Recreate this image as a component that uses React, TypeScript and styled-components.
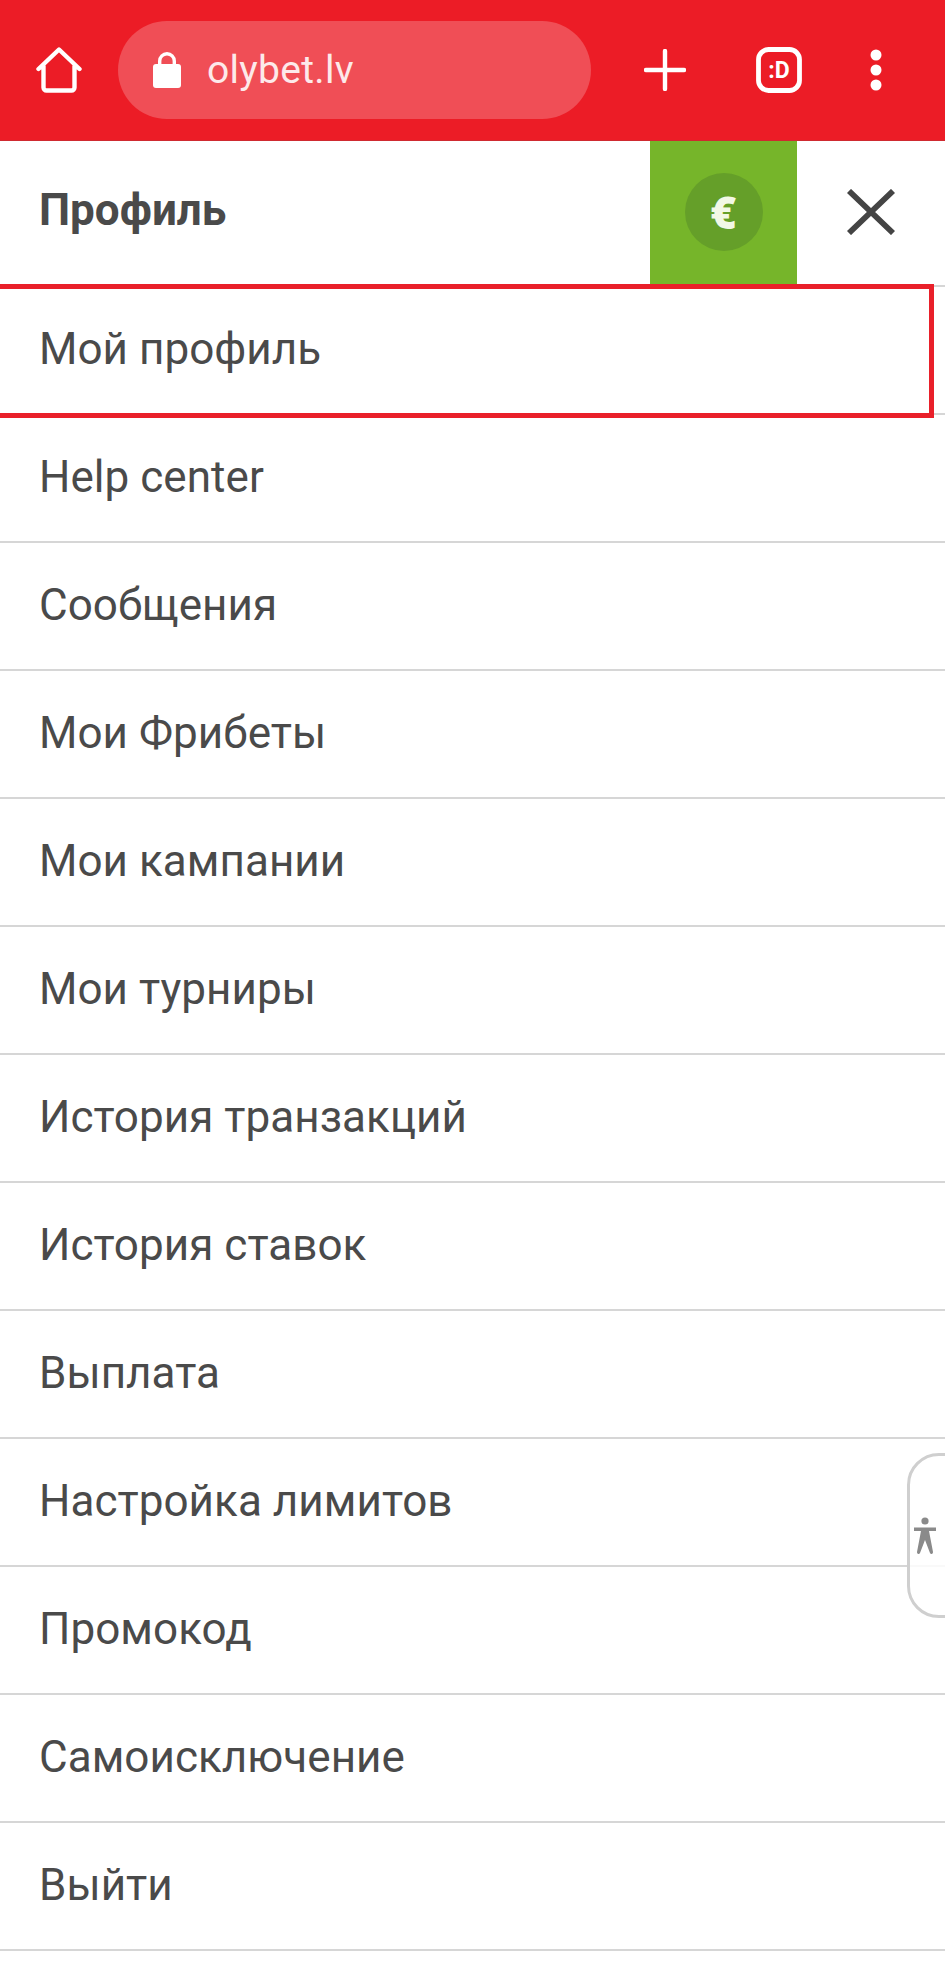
import React, { FC } from "react";
import styled, { createGlobalStyle } from "styled-components";

const GlobalStyle = createGlobalStyle`
  html, body {
    margin: 0;
    padding: 0;
    background: #fff;
  }
  body {
    font-family: Roboto, "Liberation Sans", sans-serif;
    color: #4a4a4a;
    overflow-x: hidden;
  }
`;

const Page = styled.div`
  position: relative;
  width: 945px;
  height: 1984px;
  overflow: hidden;
  background: #fff;
`;

const Toolbar = styled.div`
  display: flex;
  align-items: center;
  height: 141px;
  box-sizing: border-box;
  background: #ec1c26;
  border-bottom: 1px solid #cf2a30;
`;

const ToolButton = styled.div<{ $width: number }>`
  display: flex;
  align-items: center;
  justify-content: center;
  flex: none;
  width: ${(p) => p.$width}px;
  height: 100%;
`;

const UrlPill = styled.div`
  display: flex;
  align-items: center;
  flex: none;
  width: 473px;
  height: 98px;
  box-sizing: border-box;
  margin-bottom: 1px;
  padding-left: 35px;
  gap: 26px;
  border-radius: 49px;
  background: #f04e56;
`;

const UrlText = styled.span`
  font-size: 39px;
  letter-spacing: 0.3px;
  color: #fde9ea;
`;

const Header = styled.div`
  display: flex;
  align-items: stretch;
  height: 146px;
  box-sizing: border-box;
  border-bottom: 2px solid #d6d6d6;
`;

const Title = styled.div`
  display: flex;
  align-items: center;
  flex: 1;
  padding-left: 39px;
  padding-bottom: 6px;
  font-size: 44px;
  font-weight: 700;
`;

const BalanceBlock = styled.div`
  display: flex;
  align-items: center;
  justify-content: center;
  flex: none;
  width: 147px;
  padding-bottom: 3px;
  background: #76b52a;
`;

const CurrencyCircle = styled.div`
  display: flex;
  align-items: center;
  justify-content: center;
  width: 78px;
  height: 78px;
  border-radius: 50%;
  background: #659f29;
  color: #f2f8e6;
  font-family: "Open Sans", sans-serif;
  font-size: 44px;
  font-weight: 800;
`;

const CloseButton = styled.div`
  display: flex;
  align-items: center;
  justify-content: center;
  flex: none;
  width: 148px;
  padding-bottom: 3px;
  color: #444;
`;

const Row = styled.div<{ $active?: boolean }>`
  position: relative;
  display: flex;
  align-items: center;
  height: 128px;
  box-sizing: border-box;
  padding-left: 39px;
  padding-bottom: 3px;
  border-bottom: 2px solid #d6d6d6;
  font-size: 44px;
  letter-spacing: 0.05px;

  ${(p) =>
    p.$active &&
    `
    &::after {
      content: "";
      position: absolute;
      top: -3px;
      bottom: -5px;
      left: -8px;
      right: 11px;
      border: 5px solid #e9202a;
    }
  `}
`;

const AccessTab = styled.div`
  position: absolute;
  top: 1453px;
  right: -32px;
  display: flex;
  align-items: center;
  justify-content: flex-start;
  width: 70px;
  height: 165px;
  box-sizing: border-box;
  padding-left: 3px;
  border: 3px solid #cfcfcf;
  border-radius: 32px;
  background: rgba(255, 255, 255, 0.85);
`;

const items = [
  "Мой профиль",
  "Help center",
  "Сообщения",
  "Мои Фрибеты",
  "Мои кампании",
  "Мои турниры",
  "История транзакций",
  "История ставок",
  "Выплата",
  "Настройка лимитов",
  "Промокод",
  "Самоисключение",
  "Выйти",
];

const HomeIcon: FC = () => (
  <svg width="46" height="46" viewBox="0 0 46 46" fill="none" stroke="#fff" strokeWidth="4.4" strokeLinejoin="round" strokeLinecap="round">
    <path d="M2.5 22 L23 2.5 L43.5 22 M7.5 19 V40.5 a3 3 0 0 0 3 3 H35.5 a3 3 0 0 0 3 -3 V19" />
  </svg>
);

const LockIcon: FC = () => (
  <svg width="28" height="36" viewBox="0 0 28 36" fill="#fff">
    <path d="M5 15 V9 a9 9 0 0 1 18 0 V15 H19.6 V9 a5.6 5.6 0 0 0 -11.2 0 V15 Z" />
    <rect x="0" y="12" width="28" height="24" rx="3" />
  </svg>
);

const PlusIcon: FC = () => (
  <svg width="42" height="42" viewBox="0 0 42 42" stroke="#fff" strokeWidth="4.4" strokeLinecap="round">
    <path d="M21 2 V40 M2 21 H40" />
  </svg>
);

const TabIcon: FC = () => (
  <svg width="46" height="46" viewBox="0 0 46 46" fill="none">
    <rect x="2.5" y="2.5" width="41" height="41" rx="10" stroke="#fff" strokeWidth="4.8" />
    <text x="23" y="31" textAnchor="middle" fill="#fff" fontFamily="Roboto, sans-serif" fontSize="23" fontWeight="700">
      :D
    </text>
  </svg>
);

const MenuDots: FC = () => (
  <svg width="12" height="42" viewBox="0 0 12 42" fill="#fff">
    <circle cx="6" cy="6" r="5.5" />
    <circle cx="6" cy="21" r="5.5" />
    <circle cx="6" cy="36" r="5.5" />
  </svg>
);

const CloseIcon: FC = () => (
  <svg width="48" height="46" viewBox="0 0 48 46" stroke="currentColor" strokeWidth="5.8">
    <path d="M2 2 L46 44 M46 2 L2 44" />
  </svg>
);

const AccessIcon: FC = () => (
  <svg width="24" height="38" viewBox="0 0 24 38" fill="#8a8a8a">
    <circle cx="12" cy="4" r="3.6" />
    <path d="M1 10.5 H23 V14 H16 L20 35 a1.6 1.6 0 0 1 -3.2 .6 L12 23 L7.2 35.6 a1.6 1.6 0 0 1 -3.2 -.6 L8 14 H1 Z" />
  </svg>
);

export default function App() {
  return (
    <Page>
      <GlobalStyle />
      <Toolbar>
        <ToolButton $width={118}>
          <HomeIcon />
        </ToolButton>
        <UrlPill>
          <LockIcon />
          <UrlText>olybet.lv</UrlText>
        </UrlPill>
        <ToolButton $width={147}>
          <PlusIcon />
        </ToolButton>
        <ToolButton $width={81}>
          <TabIcon />
        </ToolButton>
        <ToolButton $width={114}>
          <MenuDots />
        </ToolButton>
      </Toolbar>
      <Header>
        <Title>Профиль</Title>
        <BalanceBlock>
          <CurrencyCircle>€</CurrencyCircle>
        </BalanceBlock>
        <CloseButton>
          <CloseIcon />
        </CloseButton>
      </Header>
      {items.map((label, i) => (
        <Row key={label} $active={i === 0}>
          {label}
        </Row>
      ))}
      <AccessTab>
        <AccessIcon />
      </AccessTab>
    </Page>
  );
}
